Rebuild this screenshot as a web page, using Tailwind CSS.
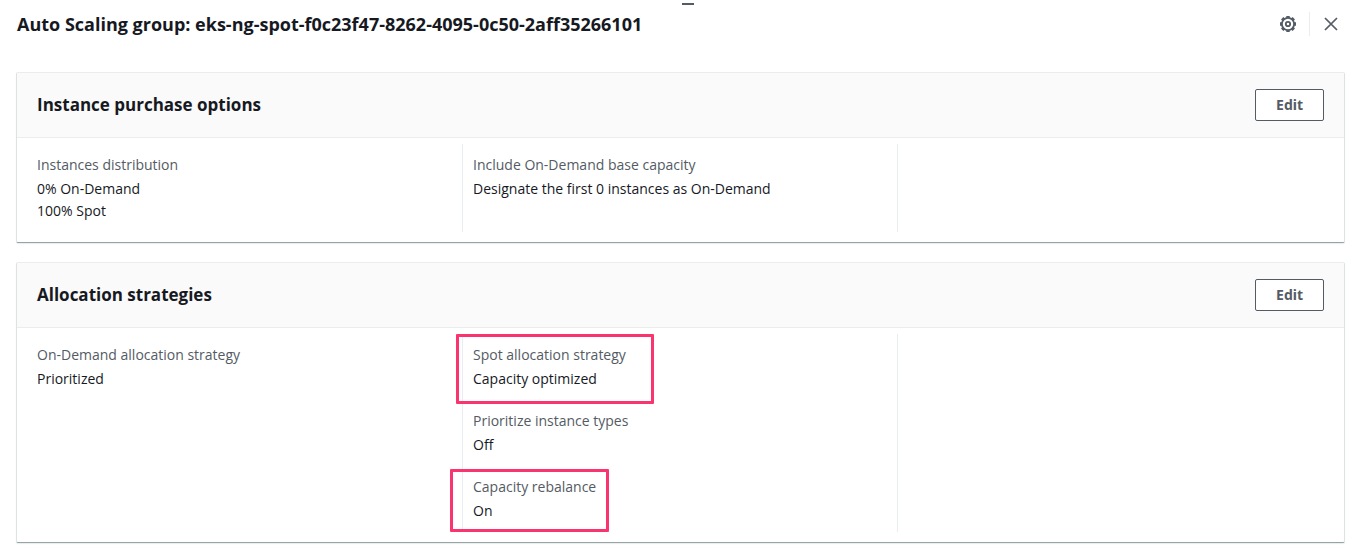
<!DOCTYPE html>
<html lang="en">
<head>
<meta charset="utf-8">
<meta name="viewport" content="width=device-width, initial-scale=1">
<title>Auto Scaling group</title>
<script src="https://cdn.jsdelivr.net/npm/@tailwindcss/browser@4"></script>
</head>
<body class="bg-white font-['Open_Sans','Noto_Sans',sans-serif] text-[14px] leading-[22px] text-[#16191f]">
<div class="relative">
  <!-- Split panel drag handle -->
  <div class="absolute top-[3px] left-[682px] h-[2px] w-3 bg-[#545b64]"></div>

  <header class="flex h-12 items-center justify-between pr-5 pl-[17px]">
    <h1 class="text-[18px] font-bold">Auto Scaling group: eks-ng-spot-f0c23f47-8262-4095-0c50-2aff35266101</h1>
    <div class="flex items-center text-[#545b64]">
      <button type="button" aria-label="Preferences" class="mr-[13px]">
        <svg class="block size-4" viewBox="0 0 16 16" fill="none" stroke="currentColor">
          <circle cx="8" cy="8" r="6.1" stroke-width="1.8"/>
          <path stroke-width="3.4" d="M8 0v2M8 14v2M0 8h2M14 8h2M2.200 2.200l1.600 1.600M12.200 12.200l1.600 1.600M2.200 13.800l1.600-1.600M12.200 3.800l1.600-1.600"/>
          <circle cx="8" cy="8" r="2.2" stroke-width="1.8"/>
        </svg>
      </button>
      <div class="h-6 w-px bg-[#eaeded]"></div>
      <button type="button" aria-label="Close" class="ml-[13px]">
        <svg class="block size-4" viewBox="0 0 16 16" fill="none" stroke="currentColor" stroke-width="1.7">
          <path d="M2 2l12 12M14 2L2 14"/>
        </svg>
      </button>
    </div>
  </header>

  <main class="flex flex-col gap-[19px] pt-6 pr-[14px] pb-2 pl-4">
    <section class="rounded-xs border border-[#dde3e3] border-t-[#eaeded] border-b-[#95a5a6] bg-white shadow-[0_1px_1px_#00000014]">
      <div class="flex h-[65px] items-center justify-between border-b border-[#eaeded] bg-[#fafafa] px-5">
        <h2 class="text-[17px] font-bold">Instance purchase options</h2>
        <button type="button" class="h-8 rounded-xs border border-[#545b64] bg-white px-5 font-['Noto_Sans',sans-serif] text-[14px] font-bold text-[#545b64]">Edit</button>
      </div>
      <div class="grid grid-cols-3 pt-[6px] pr-3 pb-[10px] pl-[10px]">
        <dl class="p-[10px]">
          <dt class="text-[#545b64]">Instances distribution</dt>
          <dd class="mt-[2px]">0% On-Demand<br>100% Spot</dd>
        </dl>
        <dl class="border-l border-[#eaeded] p-[10px]">
          <dt class="text-[#545b64]">Include On-Demand base capacity</dt>
          <dd class="mt-[2px]">Designate the first 0 instances as On-Demand</dd>
        </dl>
        <div class="border-l border-[#eaeded]"></div>
      </div>
    </section>

    <section class="rounded-xs border border-[#dde3e3] border-t-[#eaeded] border-b-[#95a5a6] bg-white shadow-[0_1px_1px_#00000014]">
      <div class="flex h-[65px] items-center justify-between border-b border-[#eaeded] bg-[#fafafa] px-5">
        <h2 class="text-[17px] font-bold">Allocation strategies</h2>
        <button type="button" class="h-8 rounded-xs border border-[#545b64] bg-white px-5 font-['Noto_Sans',sans-serif] text-[14px] font-bold text-[#545b64]">Edit</button>
      </div>
      <div class="grid grid-cols-3 pt-[6px] pr-3 pb-[10px] pl-[10px]">
        <dl class="p-[10px]">
          <dt class="text-[#545b64]">On-Demand allocation strategy</dt>
          <dd class="mt-[2px]">Prioritized</dd>
        </dl>
        <dl class="flex flex-col gap-5 border-l border-[#eaeded] p-[10px]">
          <div class="relative">
            <dt class="text-[#545b64]">Spot allocation strategy</dt>
            <dd class="mt-[2px]">Capacity optimized</dd>
            <span class="absolute -top-[10px] -left-[17px] h-[70px] w-[198px] rounded-[1px] border-3 border-[#f9346f]"></span>
          </div>
          <div>
            <dt class="text-[#545b64]">Prioritize instance types</dt>
            <dd class="mt-[2px]">Off</dd>
          </div>
          <div class="relative">
            <dt class="text-[#545b64]">Capacity rebalance</dt>
            <dd class="mt-[2px]">On</dd>
            <span class="absolute -top-[7px] -left-[23px] h-[63px] w-[159px] rounded-[1px] border-3 border-[#f9346f]"></span>
          </div>
        </dl>
        <div class="border-l border-[#eaeded]"></div>
      </div>
    </section>
  </main>
</div>
</body>
</html>
